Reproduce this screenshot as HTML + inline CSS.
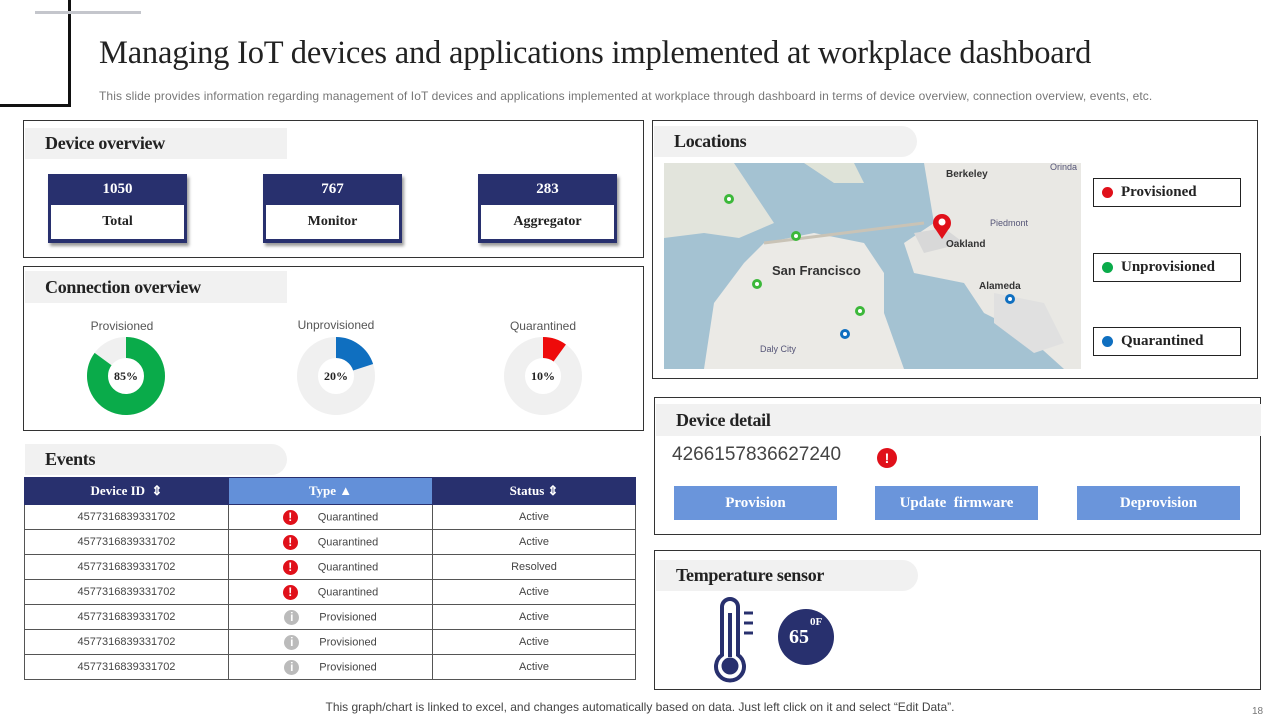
<!DOCTYPE html>
<html><head><meta charset="utf-8"><style>
*{margin:0;padding:0;box-sizing:border-box}
body{width:1280px;height:720px;background:#fff;position:relative;overflow:hidden;font-family:"Liberation Sans",sans-serif}
.a{position:absolute}
.serif{font-family:"Liberation Serif",serif;font-weight:bold;color:#222}
.box{position:absolute;border:1.5px solid #333}
.hd{position:absolute;background:#f1f1f1;font-family:"Liberation Serif",serif;font-weight:bold;font-size:18px;color:#222;padding-left:20px;display:flex;align-items:center;letter-spacing:-0.3px}
.card{position:absolute;width:139px;height:69px;background:#28306e;box-shadow:2px 3px 3px #999}
.card .n{color:#fff;font-family:"Liberation Serif",serif;font-weight:bold;font-size:15px;text-align:center;height:31px;line-height:31px}
.card .l{position:absolute;left:3px;right:3px;top:31px;bottom:4px;background:#fff;font-family:"Liberation Serif",serif;font-weight:bold;font-size:14px;text-align:center;line-height:34px;color:#222}
table{border-collapse:collapse;position:absolute;left:24px;top:477px;width:612px;font-size:11px;color:#444}
th{height:27px;background:#28306e;color:#fff;font-family:"Liberation Serif",serif;font-size:13px;font-weight:bold;border:1px solid #28306e}
th.t{background:#6390d9}
td{height:25px;border:1px solid #555;text-align:center}
.ic{display:inline-block;width:15px;height:15px;border-radius:50%;background:#e0101a;color:#fff;font-weight:bold;font-size:12px;line-height:15px;text-align:center;vertical-align:middle;margin-right:20px}
.ic.g{background:#bbb}
.btn{position:absolute;top:486px;width:163px;height:34px;background:#6a95db;color:#fff;font-family:"Liberation Serif",serif;font-weight:bold;font-size:15px;text-align:center;line-height:34px}
.leg{position:absolute;left:1093px;width:148px;height:29px;border:1.5px solid #222;font-family:"Liberation Serif",serif;font-weight:bold;font-size:15px;color:#222;line-height:27px;padding-left:27px}
.leg i{position:absolute;left:8px;top:8px;width:11px;height:11px;border-radius:50%}
.dl{position:absolute;font-size:12px;color:#555;text-align:center;width:140px}
</style></head><body>
<div class="a" style="left:68px;top:0;width:3px;height:107px;background:#111"></div>
<div class="a" style="left:0;top:104px;width:71px;height:3px;background:#111"></div>
<div class="a" style="left:35px;top:11px;width:106px;height:3px;background:#c4c6cc"></div>
<div class="a" style="left:99px;top:35px;font-family:'Liberation Serif',serif;font-size:32.5px;color:#222;white-space:nowrap;letter-spacing:-0.2px">Managing IoT devices and applications implemented at workplace dashboard</div>
<div class="a" style="left:99px;top:89px;font-size:12px;color:#777;white-space:nowrap;letter-spacing:0.1px">This slide provides information regarding management of IoT devices and applications implemented at workplace through dashboard in terms of device overview, connection overview, events, etc.</div>

<div class="box" style="left:23px;top:120px;width:621px;height:138px"></div>
<div class="hd" style="left:25px;top:128px;width:262px;height:31px">Device overview</div>
<div class="card" style="left:48px;top:174px"><div class="n">1050</div><div class="l">Total</div></div>
<div class="card" style="left:263px;top:174px"><div class="n">767</div><div class="l">Monitor</div></div>
<div class="card" style="left:478px;top:174px"><div class="n">283</div><div class="l">Aggregator</div></div>

<div class="box" style="left:23px;top:266px;width:621px;height:165px"></div>
<div class="hd" style="left:25px;top:271px;width:262px;height:32px">Connection overview</div>
<div class="dl" style="left:52px;top:319px">Provisioned</div>
<div class="dl" style="left:266px;top:318px">Unprovisioned</div>
<div class="dl" style="left:473px;top:319px">Quarantined</div>
<svg class="a" style="left:0;top:0" width="650" height="440">
<g fill="none" stroke-width="21">
<circle cx="126" cy="376" r="28.5" stroke="#f0f0f0"/>
<circle cx="126" cy="376" r="28.5" stroke="#0aab4a" stroke-dasharray="152.2 179" transform="rotate(-90 126 376)"/>
<circle cx="336" cy="376" r="28.5" stroke="#f0f0f0"/>
<circle cx="336" cy="376" r="28.5" stroke="#0f6fc0" stroke-dasharray="35.8 179" transform="rotate(-90 336 376)"/>
<circle cx="543" cy="376" r="28.5" stroke="#f0f0f0"/>
<circle cx="543" cy="376" r="28.5" stroke="#ee0a0a" stroke-dasharray="17.9 179" transform="rotate(-90 543 376)"/>
</g>
<g font-family="Liberation Serif" font-weight="bold" font-size="12" fill="#222" text-anchor="middle">
<text x="126" y="380">85%</text><text x="336" y="380">20%</text><text x="543" y="380">10%</text></g>
</svg>

<div class="hd" style="left:25px;top:444px;width:262px;height:31px;border-radius:0 16px 16px 0">Events</div>
<table>
<tr><th style="width:204px">Device ID &nbsp;&#8661;</th><th class="t" style="width:204px">Type &#9650;</th><th>Status &#8661;</th></tr>
<tr><td>4577316839331702</td><td><span class="ic">!</span>Quarantined</td><td>Active</td></tr>
<tr><td>4577316839331702</td><td><span class="ic">!</span>Quarantined</td><td>Active</td></tr>
<tr><td>4577316839331702</td><td><span class="ic">!</span>Quarantined</td><td>Resolved</td></tr>
<tr><td>4577316839331702</td><td><span class="ic">!</span>Quarantined</td><td>Active</td></tr>
<tr><td>4577316839331702</td><td><span class="ic g">i</span>Provisioned</td><td>Active</td></tr>
<tr><td>4577316839331702</td><td><span class="ic g">i</span>Provisioned</td><td>Active</td></tr>
<tr><td>4577316839331702</td><td><span class="ic g">i</span>Provisioned</td><td>Active</td></tr>
</table>

<div class="box" style="left:652px;top:120px;width:606px;height:259px"></div>
<div class="hd" style="left:654px;top:126px;width:263px;height:31px;border-radius:0 16px 16px 0">Locations</div>
<svg class="a" style="left:664px;top:163px" width="417" height="206" viewBox="0 0 417 206">
<rect width="417" height="206" fill="#a4c2d2"/>
<path d="M0 0H70L90 30L110 60L75 75L40 70L0 75Z" fill="#e2e4dc"/>
<path d="M100 80L150 70L200 80L220 110L220 150L240 206H40L50 140L80 100Z" fill="#ebeae6"/>
<path d="M140 0H190L200 20L170 20Z" fill="#dfe3d8"/>
<path d="M260 0H417V206H400L360 170L320 150L300 120L250 110L240 80L270 60Z" fill="#e9e8e4"/>
<path d="M330 130L380 140L400 180L370 190L330 160Z" fill="#e0e0e0"/>
<path d="M250 70L280 65L300 80L260 90Z" fill="#d8d8d8"/>
<path d="M100 80L260 60" stroke="#c9c3b6" stroke-width="3" fill="none"/>
<g font-family="Liberation Sans" font-weight="bold" fill="#333">
<text x="108" y="112" font-size="13">San Francisco</text>
<text x="282" y="84" font-size="10">Oakland</text>
<text x="282" y="14" font-size="10">Berkeley</text>
<text x="315" y="126" font-size="10">Alameda</text>
<text x="326" y="63" font-size="9" fill="#557" font-weight="normal">Piedmont</text>
<text x="96" y="189" font-size="9" fill="#557" font-weight="normal">Daly City</text>
<text x="386" y="7" font-size="9" fill="#557" font-weight="normal">Orinda</text>
</g>
<g><circle cx="278" cy="60" r="9" fill="#e0101a"/><path d="M270 64L278 76L286 64Z" fill="#e0101a"/><circle cx="278" cy="59" r="3.5" fill="#fff"/></g>
<g fill="#3cb83a"><circle cx="65" cy="36" r="5"/><circle cx="132" cy="73" r="5"/><circle cx="93" cy="121" r="5"/><circle cx="196" cy="148" r="5"/></g>
<g fill="#0f6fc0"><circle cx="181" cy="171" r="5"/><circle cx="346" cy="136" r="5"/></g>
<g fill="#fff"><circle cx="65" cy="36" r="2"/><circle cx="132" cy="73" r="2"/><circle cx="93" cy="121" r="2"/><circle cx="196" cy="148" r="2"/><circle cx="181" cy="171" r="2"/><circle cx="346" cy="136" r="2"/></g>
</svg>
<div class="leg" style="top:178px"><i style="background:#e0101a"></i>Provisioned</div>
<div class="leg" style="top:253px"><i style="background:#0aab4a"></i>Unprovisioned</div>
<div class="leg" style="top:327px"><i style="background:#0f6fc0"></i>Quarantined</div>

<div class="box" style="left:654px;top:397px;width:607px;height:138px"></div>
<div class="hd" style="left:656px;top:404px;width:605px;height:32px">Device detail</div>
<div class="a" style="left:672px;top:444px;font-size:19px;color:#444">4266157836627240</div>
<div class="a" style="left:877px;top:448px;width:20px;height:20px;border-radius:50%;background:#e0101a;color:#fff;font-weight:bold;font-size:14px;text-align:center;line-height:20px">!</div>
<div class="btn" style="left:674px">Provision</div>
<div class="btn" style="left:875px">Update&nbsp; firmware</div>
<div class="btn" style="left:1077px">Deprovision</div>

<div class="box" style="left:654px;top:550px;width:607px;height:140px"></div>
<div class="hd" style="left:656px;top:560px;width:262px;height:31px;border-radius:0 16px 16px 0">Temperature sensor</div>
<svg class="a" style="left:700px;top:595px" width="60" height="90">
<path d="M22 12a8 8 0 0 1 16 0v48a14 14 0 1 1 -16 0Z" fill="none" stroke="#28306e" stroke-width="4"/>
<rect x="28" y="18" width="4" height="44" fill="#28306e"/>
<circle cx="30" cy="71" r="8.5" fill="#28306e"/>
<g stroke="#28306e" stroke-width="3"><line x1="44" y1="18" x2="53" y2="18"/><line x1="44" y1="28" x2="53" y2="28"/><line x1="44" y1="38" x2="53" y2="38"/></g>
</svg>
<div class="a" style="left:778px;top:609px;width:56px;height:56px;border-radius:50%;background:#28306e"></div>
<div class="a serif" style="left:789px;top:626px;color:#fff;font-size:20px">65</div>
<div class="a serif" style="left:810px;top:616px;color:#fff;font-size:11px">0F</div>

<div class="a" style="left:0;width:1280px;top:700px;text-align:center;font-size:12px;color:#444">This graph/chart is linked to excel, and changes automatically based on data. Just left click on it and select “Edit Data”.</div>
<div class="a" style="left:1252px;top:706px;font-size:10px;color:#777">18</div>
</body></html>
